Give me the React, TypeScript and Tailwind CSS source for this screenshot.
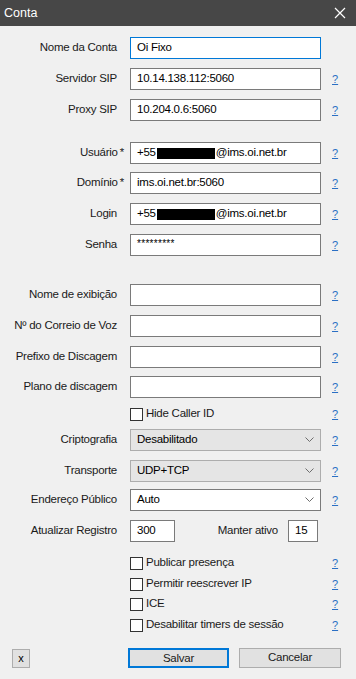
import React from 'react'

const font = { fontFamily: '"Liberation Sans", Arial, sans-serif' }

const txt = 'text-[11.5px] tracking-[-0.25px] text-[#1a1a1a]'

const Help = () => (
  <span className="w-[22px] pl-[11px] text-[11px] leading-none text-[#2a6fc4] underline">?</span>
)

const Row = ({
  label,
  req = false,
  mt,
  help = true,
  children,
}: {
  label: string
  req?: boolean
  mt: string
  help?: boolean
  children: React.ReactNode
}) => (
  <div className={`flex items-center h-[22px] ${mt}`}>
    <div className={`w-[117px] text-right whitespace-nowrap ${txt}`}>
      {label}
      {req && <span className="mr-[-7px] ml-[2px]">*</span>}
    </div>
    <div className="w-[191px] ml-[13px] h-full">{children}</div>
    {help ? <Help /> : null}
  </div>
)

const Input = ({ value = '', focus = false }: { value?: React.ReactNode; focus?: boolean }) => (
  <div
    className={`h-full w-full bg-white border flex items-center pl-[6px] text-[11.5px] tracking-[-0.25px] text-black ${
      focus ? 'border-[#0078d7]' : 'border-[#7a7a7a]'
    }`}
  >
    {value}
  </div>
)

const Redacted = () => (
  <span className="flex items-center">
    +55
    <span className="inline-block w-[58px] h-[11px] bg-black mx-[1px]" />
    @ims.oi.net.br
  </span>
)

const Chevron = () => (
  <svg width="9" height="6" viewBox="0 0 9 6" className="mr-[6px]">
    <path d="M0.5 0.5 L4.5 4.5 L8.5 0.5" fill="none" stroke="#6d6d6d" strokeWidth="1" />
  </svg>
)

const Select = ({ value, disabled = false }: { value: string; disabled?: boolean }) => (
  <div
    className={`h-full w-full border flex items-center justify-between pl-[6px] text-[11.5px] tracking-[-0.25px] text-black ${
      disabled ? 'bg-[#e5e5e5] border-[#adadad]' : 'bg-white border-[#7a7a7a]'
    }`}
  >
    <span>{value}</span>
    <Chevron />
  </div>
)

const Check = ({ label, mt }: { label: string; mt: string }) => (
  <div className={`flex items-center h-[18px] ${mt}`}>
    <div className="w-[130px]" />
    <div className="w-[191px] flex items-center">
      <span className="w-[13px] h-[13px] border border-[#333] bg-white" />
      <span className={`ml-[3px] ${txt}`}>{label}</span>
    </div>
    <Help />
  </div>
)

export default function App() {
  return (
    <div className="w-[356px] h-[679px] bg-[#f0f0f0] flex flex-col" style={font}>
      <div className="h-[26px] bg-[#474747] flex items-center justify-between px-[4px]">
        <span className="text-white text-[12.5px]">Conta</span>
        <svg width="12" height="12" viewBox="0 0 12 12" className="mr-[6px]">
          <path d="M1 1 L11 11 M11 1 L1 11" stroke="#fff" strokeWidth="1.2" />
        </svg>
      </div>

      <Row label="Nome da Conta" mt="mt-[11px]" help={false}>
        <Input value="Oi Fixo" focus />
      </Row>
      <Row label="Servidor SIP" mt="mt-[9px]">
        <Input value="10.14.138.112:5060" />
      </Row>
      <Row label="Proxy SIP" mt="mt-[9px]">
        <Input value="10.204.0.6:5060" />
      </Row>

      <Row label="Usuário" req mt="mt-[21px]">
        <Input value={<Redacted />} />
      </Row>
      <Row label="Domínio" req mt="mt-[8px]">
        <Input value="ims.oi.net.br:5060" />
      </Row>
      <Row label="Login" mt="mt-[9px]">
        <Input value={<Redacted />} />
      </Row>
      <Row label="Senha" mt="mt-[9px]">
        <Input value={<span className="text-[10px] tracking-[0.3px] -mt-[4px]">*********</span>} />
      </Row>

      <Row label="Nome de exibição" mt="mt-[28px]">
        <Input />
      </Row>
      <Row label="Nº do Correio de Voz" mt="mt-[9px]">
        <Input />
      </Row>
      <Row label="Prefixo de Discagem" mt="mt-[9px]">
        <Input />
      </Row>
      <Row label="Plano de discagem" mt="mt-[8px]">
        <Input />
      </Row>
      <Check label="Hide Caller ID" mt="mt-[7px]" />

      <Row label="Criptografia" mt="mt-[6px]">
        <Select value="Desabilitado" disabled />
      </Row>
      <Row label="Transporte" mt="mt-[9px]">
        <Select value="UDP+TCP" disabled />
      </Row>
      <Row label="Endereço Público" mt="mt-[7px]">
        <Select value="Auto" />
      </Row>
      <div className="flex items-center h-[22px] mt-[9px]">
        <div className={`w-[117px] text-right ${txt}`}>Atualizar Registro</div>
        <div className="ml-[13px] w-[45px] h-full">
          <Input value="300" />
        </div>
        <div className={`w-[113px] text-right pr-[10px] ${txt}`}>Manter ativo</div>
        <div className="w-[30px] h-full">
          <Input value="15" />
        </div>
      </div>

      <Check label="Publicar presença" mt="mt-[12px]" />
      <Check label="Permitir reescrever IP" mt="mt-[3px]" />
      <Check label="ICE" mt="mt-[2px]" />
      <Check label="Desabilitar timers de sessão" mt="mt-[3px]" />

      <div className="flex items-center mt-[14px] h-[20px]">
        <button className="ml-[12px] w-[18px] h-[19px] bg-[#e1e1e1] border border-[#adadad] text-[11px] text-black leading-none">
          x
        </button>
        <button className={`ml-[98px] w-[101px] h-[20px] bg-[#e1e1e1] border-2 border-[#0078d7] ${txt}`}>
          Salvar
        </button>
        <button className={`ml-[10px] w-[102px] h-[20px] bg-[#e1e1e1] border border-[#adadad] ${txt}`}>
          Cancelar
        </button>
      </div>
    </div>
  )
}
